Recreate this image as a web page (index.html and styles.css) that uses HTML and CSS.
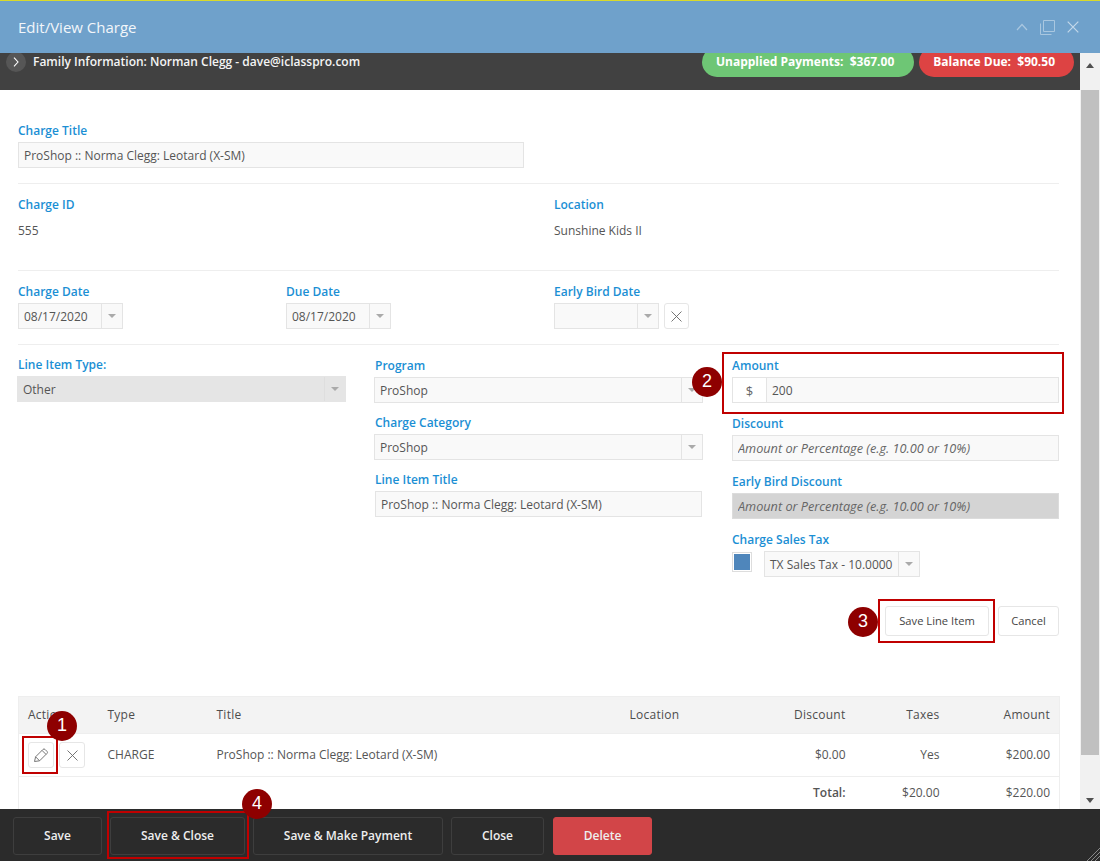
FILE: index.html
```html
<!DOCTYPE html>
<html lang="en">
<head>
    <meta charset="UTF-8">
    <meta name="viewport" content="width=device-width, initial-scale=1.0">
    <title>Edit/View Charge</title>
    <link rel="stylesheet" href="styles.css">
</head>
<body>
    <div class="window">
        <div class="header">
            <span class="header-title">Edit/View Charge</span>
            <div class="header-icons">
                <svg width="12" height="8" viewBox="0 0 12 8"><path d="M1 7L6 1.5L11 7" fill="none" stroke="#a9c7e0" stroke-width="1.2"/></svg>
                <svg width="15" height="15" viewBox="0 0 15 15"><path d="M3.5.5H14.5V11.5H3.5ZM.5 3.5V14.5H11.5" fill="none" stroke="#a9c7e0" stroke-width="1"/></svg>
                <svg width="12" height="12" viewBox="0 0 12 12"><path d="M.7.7L11.3 11.3M11.3.7L.7 11.3" fill="none" stroke="#c3d8ea" stroke-width="1.2"/></svg>
            </div>
        </div>

        <div class="main">
            <div class="content">
                <div class="family">
                    <span class="toggle">
                        <svg width="6" height="10" viewBox="0 0 6 10"><path d="M1 .7L5 5L1 9.3" fill="none" stroke="#fff" stroke-width="1.1"/></svg>
                    </span>
                    <span class="family-text">Family Information: Norman Clegg - dave@iclasspro.com</span>
                    <span class="pill pill-green">Unapplied Payments:&nbsp; $367.00</span>
                    <span class="pill pill-red">Balance Due:&nbsp; $90.50</span>
                </div>

                <div class="form">
                    <div class="field title-field">
                        <label>Charge Title</label>
                        <input class="input" type="text" value="ProShop :: Norma Clegg: Leotard (X-SM)">
                    </div>
                    <div class="divider"></div>

                    <div class="info-row">
                        <div class="info-cell">
                            <label>Charge ID</label>
                            <div class="info-value">555</div>
                        </div>
                        <div class="info-cell">
                            <label>Location</label>
                            <div class="info-value">Sunshine Kids II</div>
                        </div>
                    </div>
                    <div class="divider info-divider"></div>

                    <div class="date-row">
                        <div class="field">
                            <label>Charge Date</label>
                            <div class="select date-select"><span class="select-text">08/17/2020</span><span class="select-arrow"></span></div>
                        </div>
                        <div class="field">
                            <label>Due Date</label>
                            <div class="select date-select"><span class="select-text">08/17/2020</span><span class="select-arrow"></span></div>
                        </div>
                        <div class="field">
                            <label>Early Bird Date</label>
                            <div class="date-clear">
                                <div class="select date-select"><span class="select-text"></span><span class="select-arrow"></span></div>
                                <button class="icon-btn">
                                    <svg width="11" height="11" viewBox="0 0 11 11"><path d="M.5.5L10.5 10.5M10.5.5L.5 10.5" fill="none" stroke="#666" stroke-width=".9"/></svg>
                                </button>
                            </div>
                        </div>
                    </div>
                    <div class="divider"></div>

                    <div class="line-grid">
                        <div class="field type-col">
                            <label>Line Item Type:</label>
                            <div class="select select-disabled"><span class="select-text">Other</span><span class="select-arrow"></span></div>
                        </div>
                        <div class="stack stack-middle">
                            <div class="field">
                                <label>Program</label>
                                <div class="select"><span class="select-text">ProShop</span><span class="select-arrow"></span></div>
                            </div>
                            <div class="field">
                                <label>Charge Category</label>
                                <div class="select"><span class="select-text">ProShop</span><span class="select-arrow"></span></div>
                            </div>
                            <div class="field">
                                <label>Line Item Title</label>
                                <input class="input" type="text" value="ProShop :: Norma Clegg: Leotard (X-SM)">
                            </div>
                        </div>
                        <div class="stack">
                            <div class="field">
                                <label>Amount</label>
                                <div class="input-group">
                                    <span class="addon">$</span>
                                    <input class="input" type="text" value="200">
                                </div>
                            </div>
                            <div class="field">
                                <label>Discount</label>
                                <input class="input" type="text" placeholder="Amount or Percentage (e.g. 10.00 or 10%)">
                            </div>
                            <div class="field">
                                <label>Early Bird Discount</label>
                                <input class="input input-disabled" type="text" placeholder="Amount or Percentage (e.g. 10.00 or 10%)">
                            </div>
                            <div class="field">
                                <label>Charge Sales Tax</label>
                                <div class="tax-row">
                                    <span class="checkbox"></span>
                                    <div class="select tax-select"><span class="select-text">TX Sales Tax - 10.0000</span><span class="select-arrow"></span></div>
                                </div>
                            </div>
                        </div>
                    </div>

                    <div class="form-actions">
                        <button class="btn btn-save-line">Save Line Item</button>
                        <button class="btn btn-cancel">Cancel</button>
                    </div>

                    <table class="items">
                        <colgroup>
                            <col class="col-action"><col class="col-type"><col class="col-title">
                            <col class="col-location"><col class="col-discount"><col class="col-taxes"><col class="col-amount">
                        </colgroup>
                        <thead>
                            <tr>
                                <th>Action</th><th>Type</th><th>Title</th><th>Location</th>
                                <th class="num">Discount</th><th class="num">Taxes</th><th class="num">Amount</th>
                            </tr>
                        </thead>
                        <tbody>
                            <tr class="item-row">
                                <td class="action-cell">
                                    <div class="action-btns">
                                        <button class="icon-btn">
                                            <svg width="16" height="16" viewBox="0 0 16 16"><path d="M1.5 14.5L2.6 9.8L10 2.4Q11 1.4 12 2.4L14 4.4Q15 5.4 14 6.4L6.6 13.8ZM2.6 9.8L6.6 13.8M9 3.4L13 7.4" fill="none" stroke="#777" stroke-width="1"/></svg>
                                        </button>
                                        <button class="icon-btn">
                                            <svg width="11" height="11" viewBox="0 0 11 11"><path d="M.5.5L10.5 10.5M10.5.5L.5 10.5" fill="none" stroke="#666" stroke-width=".9"/></svg>
                                        </button>
                                    </div>
                                </td>
                                <td>CHARGE</td>
                                <td>ProShop :: Norma Clegg: Leotard (X-SM)</td>
                                <td></td>
                                <td class="num">$0.00</td><td class="num">Yes</td><td class="num">$200.00</td>
                            </tr>
                            <tr class="total-row">
                                <td colspan="4"></td>
                                <td class="num total-label">Total:</td><td class="num">$20.00</td><td class="num">$220.00</td>
                            </tr>
                        </tbody>
                    </table>
                </div>
            </div>

            <div class="scrollbar">
                <span class="scroll-arrow scroll-up"></span>
                <div class="scroll-track"><div class="scroll-thumb"></div></div>
                <span class="scroll-arrow scroll-down"></span>
            </div>
        </div>

        <div class="footer">
            <button class="footer-btn btn-w-save">Save</button>
            <button class="footer-btn btn-w-close-save">Save &amp; Close</button>
            <button class="footer-btn btn-w-pay">Save &amp; Make Payment</button>
            <button class="footer-btn btn-w-close">Close</button>
            <button class="footer-btn btn-delete">Delete</button>
            <svg class="resize-grip" width="14" height="14" viewBox="0 0 14 14"><path d="M14 1L1 14M14 5L5 14M14 9L9 14" stroke="#8a8a8a" stroke-width="1" fill="none"/></svg>
        </div>

        <!-- callouts drawn over the screen -->
        <div class="callout-box box-amount"></div>
        <div class="callout-box box-save-line"></div>
        <div class="callout-box box-edit"></div>
        <div class="callout-box box-save-close"></div>
        <span class="callout-num num-1">1</span>
        <span class="callout-num num-2">2</span>
        <span class="callout-num num-3">3</span>
        <span class="callout-num num-4">4</span>
    </div>
</body>
</html>
```

FILE: styles.css
```css
* {
    box-sizing: border-box;
}
body {
    margin: 0;
    overflow: hidden;
    font-family: "Open Sans", Arial, sans-serif;
    font-size: 12px;
    color: #555;
    background: #fff;
}
.window {
    position: relative;
    display: flex;
    flex-direction: column;
    height: 861px;
    border-top: 1px solid #d9d92a;
}
.header {
    display: flex;
    align-items: center;
    justify-content: space-between;
    flex: 0 0 52px;
    padding: 0 21px 0 18px;
    background: #6fa1cb;
}
.header-title {
    font-size: 15px;
    color: #f2f6fa;
}
.header-icons {
    display: flex;
    align-items: center;
    gap: 12px;
}
.main {
    display: flex;
    flex: 1;
    min-height: 0;
}
.content {
    display: flex;
    flex-direction: column;
    flex: 1;
    min-width: 0;
}
.family {
    display: flex;
    align-items: flex-start;
    flex: 0 0 37px;
    padding: 0 6px;
    background: #414141;
    overflow: hidden;
}
.toggle {
    display: flex;
    align-items: center;
    justify-content: center;
    width: 20px;
    height: 20px;
    margin-top: -1px;
    border-radius: 50%;
    background: #565656;
}
.family-text {
    flex: 1;
    margin: 0 0 0 7px;
    line-height: 17px;
    font-weight: 600;
    color: #f4f4f4;
}
.pill {
    height: 30px;
    margin-top: -6px;
    padding: 0 20px 0 14px;
    line-height: 30px;
    font-weight: 700;
    color: #fff;
    border-radius: 15px;
}
.pill-green {
    background: #6ec675;
}
.pill-red {
    margin-left: 5px;
    padding-right: 19px;
    background: #dd4343;
}
.form {
    flex: 1;
    min-height: 0;
    padding: 33px 21px 0 18px;
    overflow: hidden;
}
label {
    display: block;
    height: 16px;
    line-height: 16px;
    font-weight: 600;
    color: #1b8fd4;
}
.field label {
    margin-bottom: 3px;
}
.title-field {
    width: 506px;
}
.input,
.select {
    display: flex;
    align-items: center;
    width: 100%;
    height: 26px;
    background: #f9f9f9;
    border: 1px solid #e4e4e4;
}
.input {
    padding: 0 5px;
    font-family: inherit;
    font-size: 12px;
    color: #555;
    outline: none;
}
.input::placeholder {
    font-size: 12.7px;
    font-style: italic;
    color: #666;
    opacity: 1;
}
.input-disabled {
    background: #d4d4d4;
    border-color: #dcdcdc;
}
.select-text {
    flex: 1;
    padding: 0 5px;
    white-space: nowrap;
}
.select-arrow {
    display: flex;
    align-items: center;
    justify-content: center;
    flex: 0 0 21px;
    height: 100%;
    border-left: 1px solid #e4e4e4;
}
.select-arrow::after {
    content: "";
    border-style: solid;
    border-width: 4.5px 4.5px 0;
    border-color: #aaa transparent transparent;
}
.select-disabled {
    background: #e5e5e5;
    border-color: #e5e5e5;
}
.select-disabled .select-arrow {
    border-left-color: #dedede;
}
.divider {
    height: 1px;
    margin-top: 15px;
    background: #eee;
}
.info-row {
    display: grid;
    grid-template-columns: 536px 1fr;
    margin-top: 13px;
}
.info-value {
    margin-top: 10px;
    line-height: 16px;
}
.info-divider {
    margin-top: 31px;
}
.date-row {
    display: grid;
    grid-template-columns: 268px 268px 1fr;
    margin-top: 13px;
}
.date-select {
    width: 105px;
}
.date-clear {
    display: flex;
    gap: 5px;
}
.date-clear .icon-btn {
    width: 25px;
}
.icon-btn {
    display: flex;
    align-items: center;
    justify-content: center;
    width: 26px;
    height: 26px;
    padding: 0;
    background: #fff;
    border: 1px solid #e6e6e6;
    border-radius: 3px;
}
.line-grid {
    display: grid;
    grid-template-columns: 357px 357px 1fr;
    margin-top: 13px;
}
.type-col {
    width: 329px;
    margin: -1px 0 0 -1px;
}
.type-col label {
    margin-left: 1px;
}
.stack {
    display: flex;
    flex-direction: column;
    gap: 13px;
}
.stack .field {
    height: 45px;
}
.stack-middle {
    gap: 12px;
}
.stack-middle .field {
    width: 328px;
}
.stack-middle .select {
    width: 329px;
    margin-left: -1px;
}
.stack-middle .input {
    width: 327px;
}
.input-group {
    display: flex;
}
.addon {
    flex: 0 0 34px;
    height: 26px;
    line-height: 26px;
    text-align: center;
    border: 1px solid #e4e4e4;
    border-right: 0;
    font-size: 13px;
    color: #666;
}
.tax-row {
    display: flex;
    align-items: flex-start;
}
.checkbox {
    width: 20px;
    height: 20px;
    margin: 1px 12px 0 0;
    background: #4f86bb;
    border: 1px solid #ddd;
    box-shadow: inset 0 0 0 1px #fff;
}
.tax-select {
    width: 156px;
}
.form-actions {
    display: flex;
    justify-content: flex-end;
    gap: 9px;
    margin-top: 29px;
}
.btn {
    height: 30px;
    padding: 0 0 2px;
    font-family: inherit;
    font-size: 11.2px;
    color: #444;
    background: #fff;
    border: 1px solid #e6e6e6;
    border-radius: 3px;
}
.btn-save-line {
    width: 104px;
}
.btn-cancel {
    width: 61px;
}
.items {
    width: 100%;
    margin-top: 60px;
    border-collapse: collapse;
    table-layout: fixed;
    border: 1px solid #eee;
    border-bottom: 0;
}
.col-action { width: 80px; }
.col-type { width: 109px; }
.col-title { width: 413px; }
.col-location { width: 140px; }
.col-discount { width: 94px; }
.col-taxes { width: 94px; }
.col-amount { width: 111px; }
.items th,
.items td {
    padding: 0 9px 2px;
    text-align: left;
}
.items th {
    height: 37px;
    font-weight: 400;
    letter-spacing: .25px;
    color: #4d4d4d;
    background: #f3f3f3;
}
.items .num {
    text-align: right;
}
.item-row td {
    height: 43px;
    border-top: 1px solid #eee;
    border-bottom: 1px solid #eee;
}
.total-row td {
    height: 33px;
}
.total-label {
    font-weight: 600;
}
.items .action-cell {
    padding: 0 0 0 9px;
}
.action-btns {
    display: flex;
    gap: 5px;
}
.scrollbar {
    display: flex;
    flex-direction: column;
    flex: 0 0 20px;
    align-items: center;
    background: #f1f1f1;
}
.scroll-track {
    flex: 1;
    width: 100%;
    padding: 0 1px;
}
.scroll-thumb {
    width: 18px;
    height: 665px;
    background: #c0c0c0;
}
.scroll-arrow {
    flex: 0 0 37px;
    display: flex;
    align-items: center;
    justify-content: center;
}
.scroll-down {
    flex: 0 0 17px;
}
.scroll-up::after {
    content: "";
    margin-top: -12px;
    border-style: solid;
    border-width: 0 4.5px 5px;
    border-color: transparent transparent #505050;
}
.scroll-down::after {
    content: "";
    border-style: solid;
    border-width: 5px 4.5px 0;
    border-color: #505050 transparent transparent;
}
.footer {
    position: relative;
    display: flex;
    flex: 0 0 52px;
    align-items: flex-start;
    gap: 8px;
    padding: 8px 13px 0;
    background: #2b2b2b;
}
.footer-btn {
    height: 38px;
    padding: 0 0 2px;
    font-family: inherit;
    font-size: 12px;
    font-weight: 600;
    color: #eee;
    background: #2b2b2b;
    border: 1px solid #3e3e3e;
    border-radius: 3px;
}
.btn-w-save { width: 89px; }
.btn-w-close-save { width: 135px; }
.btn-w-pay { width: 190px; }
.btn-w-close { width: 93px; }
.btn-delete {
    width: 99px;
    margin-left: 1px;
    background: #d24548;
    border-color: #d24548;
}
.resize-grip {
    position: absolute;
    right: 0;
    bottom: 0;
}
.callout-box {
    position: absolute;
    border: 2px solid #c00000;
}
.box-amount {
    left: 722px;
    top: 351px;
    width: 342px;
    height: 62px;
}
.box-save-line {
    left: 878px;
    top: 598px;
    width: 117px;
    height: 44px;
}
.box-edit {
    left: 22px;
    top: 735px;
    width: 36px;
    height: 38px;
}
.box-save-close {
    left: 107px;
    top: 810px;
    width: 142px;
    height: 48px;
}
.callout-num {
    position: absolute;
    width: 30px;
    height: 30px;
    line-height: 29px;
    text-align: center;
    font-family: "Liberation Sans", Arial, sans-serif;
    font-size: 18px;
    color: #fff;
    background: #8e0000;
    border-radius: 50%;
}
.num-1 { left: 47px; top: 710px; }
.num-2 { left: 692px; top: 366px; }
.num-3 { left: 848px; top: 606px; }
.num-4 { left: 242px; top: 788px; }
```
